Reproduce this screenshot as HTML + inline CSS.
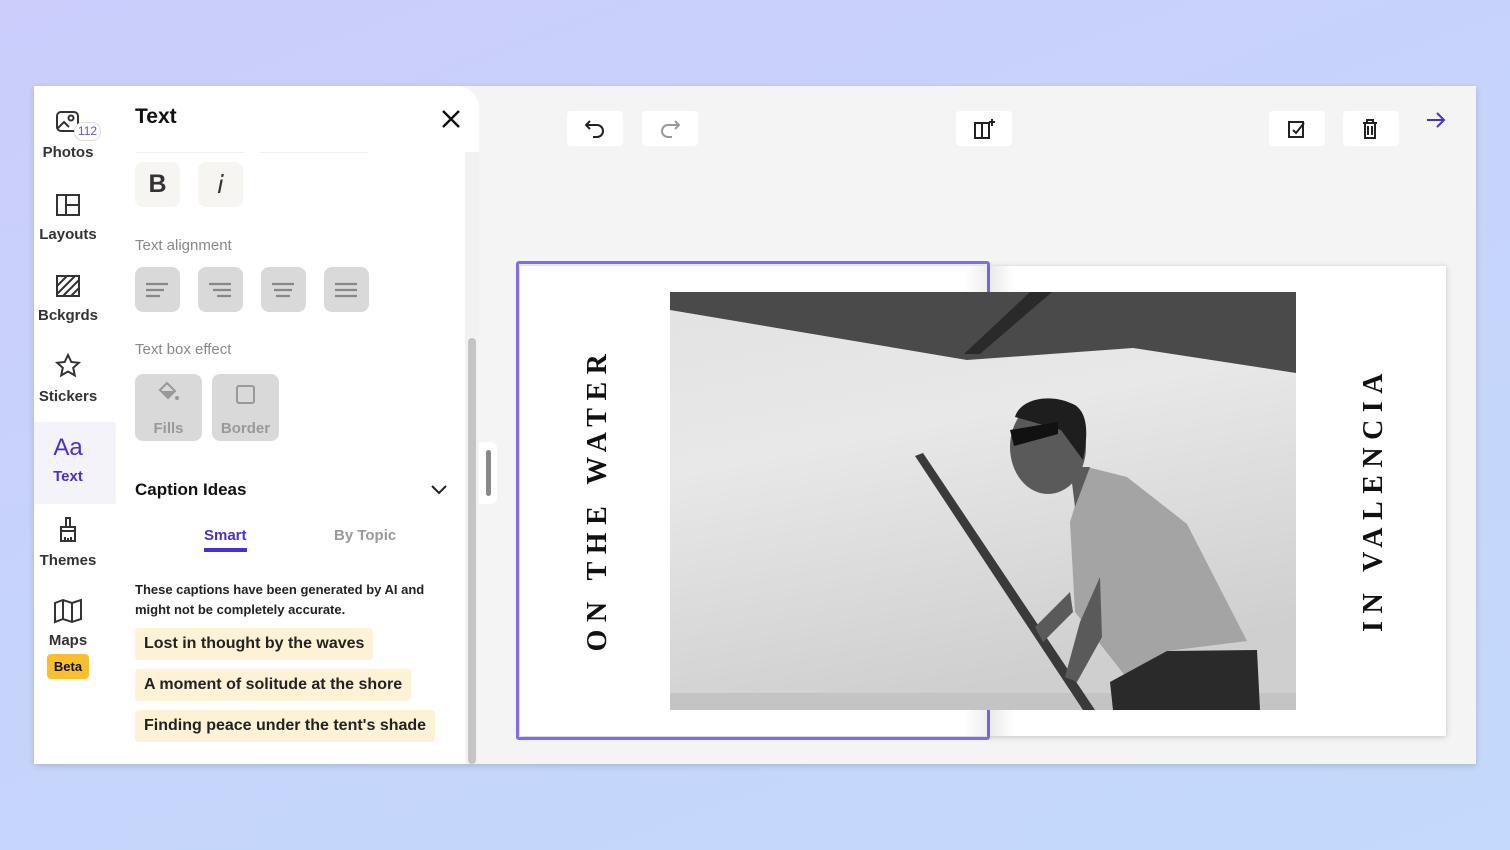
<!DOCTYPE html>
<html><head><meta charset="utf-8"><style>
*{margin:0;padding:0;box-sizing:border-box}
body{width:1510px;height:850px;overflow:hidden;background:linear-gradient(160deg,#cbcdfb 0%,#c6d4fb 50%,#c4d9fb 100%);font-family:"Liberation Sans",sans-serif;position:relative}
.abs{position:absolute}
#app{left:34px;top:86px;width:1442px;height:678px;background:#f4f4f4;box-shadow:0 2px 6px rgba(0,0,0,.15);overflow:hidden}
#side{left:0;top:0;width:82px;height:678px;background:#fff}
.nav{position:absolute;left:0;width:68px;text-align:center;font-size:15px;color:#333;font-weight:bold}
.nav svg{display:block;margin:0 auto 8px}
#panel{left:82px;top:0;width:363px;height:678px;background:#fff;border-top-right-radius:22px}
.lbl{font-size:15px;color:#888}
.btn{position:absolute;width:45px;height:45px;border-radius:8px;background:#d9d9d9}
.cap{position:absolute;left:100px;height:32px;background:#fdf1d6;border-radius:4px;font-size:16px;font-weight:bold;color:#222;padding:7px 9px;white-space:nowrap}
.tb{position:absolute;top:25px;width:56px;height:35px;background:#fff;border-radius:4px}
.tb svg{position:absolute;left:18px;top:8px}
.vt{position:absolute;font-family:"Liberation Serif",serif;font-weight:bold;font-size:28px;letter-spacing:7.5px;color:#111;white-space:nowrap;transform:rotate(-90deg);transform-origin:center}
</style></head><body>
<div id="app" class="abs">
 <div id="side" class="abs">
  <div class="nav" style="top:24px"><svg width="26" height="26" viewBox="0 0 26 26" fill="none" stroke="#333" stroke-width="2"><rect x="2" y="2" width="21" height="19" rx="4"/><circle cx="16" cy="8" r="2.5"/><path d="M3 18l6-6 5 5"/></svg>Photos</div>
  <div class="abs" style="left:40px;top:36px;width:27px;height:19px;border-radius:9px;background:#fff;border:1px solid #ddd;color:#6a4cf0;font-size:12px;text-align:center;line-height:17px">112</div>
  <div class="nav" style="top:106px"><svg width="26" height="26" viewBox="0 0 26 26" fill="none" stroke="#333" stroke-width="2"><rect x="2" y="3" width="22" height="20"/><path d="M11 3v20M11 13h13"/></svg>Layouts</div>
  <div class="nav" style="top:187px"><svg width="26" height="26" viewBox="0 0 26 26" fill="none" stroke="#333" stroke-width="2"><rect x="2" y="3" width="22" height="20"/><path d="M2 13l10-10M2 21l18-18M8 23l16-16M16 23l8-8"/></svg>Bckgrds</div>
  <div class="nav" style="top:266px"><svg width="28" height="28" viewBox="0 0 28 28" fill="none" stroke="#333" stroke-width="2"><path d="M14 3l3.3 7 7.5.8-5.6 5 1.6 7.6L14 19.5 7.2 23.4l1.6-7.6-5.6-5 7.5-.8z"/></svg>Stickers</div>
  <div class="abs" style="left:0;top:336px;width:82px;height:82px;background:#f3f3f9"></div>
  <div class="nav" style="top:348px;color:#4a2fd8;font-weight:bold"><div style="font-size:24px;font-weight:normal;line-height:28px;margin-bottom:6px">Aa</div>Text</div>
  <div class="nav" style="top:430px"><svg width="26" height="28" viewBox="0 0 26 28" fill="none" stroke="#333" stroke-width="2"><path d="M11 2h4v9h-4zM6 11h14v4H6zM6 15v10h14V15M10 25v-4M13 25v-3M16 25v-4"/></svg>Themes</div>
  <div class="nav" style="top:512px"><svg width="30" height="26" viewBox="0 0 30 26" fill="none" stroke="#333" stroke-width="2"><path d="M2 5l8-3 9 3 9-3v19l-9 3-9-3-8 3zM10 2v19M19 5v19"/></svg>Maps</div>
  <div class="abs" style="left:13px;top:568px;width:42px;height:25px;background:#fbbf2e;border-radius:4px;font-size:13px;font-weight:bold;text-align:center;line-height:25px;color:#111">Beta</div>
 </div>
 <div id="panel" class="abs">
  <div class="abs" style="left:19px;top:19px;font-size:21px;font-weight:bold;color:#111">Text</div>
  <svg class="abs" style="left:326px;top:24px" width="18" height="18" viewBox="0 0 18 18" stroke="#111" stroke-width="2.4"><path d="M1 1l16 16M17 1L1 17"/></svg>
  <div class="abs" style="left:19px;top:66px;width:110px;height:1px;background:#f0f0f0"></div>
  <div class="abs" style="left:143px;top:66px;width:110px;height:1px;background:#f0f0f0"></div>
  <div class="btn" style="left:19px;top:76px;background:#f6f5f2;font-size:25px;font-weight:bold;text-align:center;line-height:45px;color:#333">B</div>
  <div class="btn" style="left:82px;top:76px;background:#f6f5f2;font-size:25px;font-style:italic;text-align:center;line-height:45px;color:#333;font-family:'DejaVu Sans',sans-serif">i</div>
  <div class="abs lbl" style="left:19px;top:151px">Text alignment</div>
  <div class="btn" style="left:19px;top:181px"><svg width="45" height="45" stroke="#888" stroke-width="2.2"><path d="M11 17h22M11 23h18M11 29h14"/></svg></div>
  <div class="btn" style="left:82px;top:181px"><svg width="45" height="45" stroke="#888" stroke-width="2.2"><path d="M11 17h22M15 23h18M19 29h14"/></svg></div>
  <div class="btn" style="left:145px;top:181px"><svg width="45" height="45" stroke="#888" stroke-width="2.2"><path d="M11 17h22M13 23h18M15 29h14"/></svg></div>
  <div class="btn" style="left:208px;top:181px"><svg width="45" height="45" stroke="#888" stroke-width="2.2"><path d="M11 17h22M11 23h22M11 29h22"/></svg></div>
  <div class="abs lbl" style="left:19px;top:255px">Text box effect</div>
  <div class="btn" style="left:19px;top:288px;width:67px;height:67px;text-align:center;color:#999;font-weight:bold;font-size:15px"><svg width="67" height="38" viewBox="0 0 67 38" fill="#999"><path d="M25 16l7-7 8 8-7 7z" fill="none" stroke="#999" stroke-width="2"/><path d="M26 17l14 0-7 7z"/><circle cx="42" cy="24" r="2"/></svg><div style="margin-top:4px">Fills</div></div>
  <div class="btn" style="left:96px;top:288px;width:67px;height:67px;text-align:center;color:#999;font-weight:bold;font-size:15px"><svg width="67" height="38"><rect x="25" y="12" width="17" height="17" rx="2" fill="none" stroke="#999" stroke-width="2"/></svg><div style="margin-top:4px">Border</div></div>
  <div class="abs" style="left:19px;top:394px;font-size:17px;font-weight:bold;color:#111">Caption Ideas</div>
  <svg class="abs" style="left:315px;top:398px" width="16" height="12" stroke="#222" stroke-width="2" fill="none"><path d="M1 2l7 7 7-7"/></svg>
  <div class="abs" style="left:88px;top:441px;font-size:15px;font-weight:bold;color:#4a2fd8">Smart</div>
  <div class="abs" style="left:88px;top:462px;width:43px;height:4px;background:#4a2fd8"></div>
  <div class="abs" style="left:218px;top:441px;font-size:15px;font-weight:bold;color:#999">By Topic</div>
  <div class="abs" style="left:19px;top:494px;font-size:13px;font-weight:bold;color:#222;line-height:20px;width:300px">These captions have been generated by AI and might not be completely accurate.</div>
  <div class="cap" style="left:19px;top:542px">Lost in thought by the waves</div>
  <div class="cap" style="left:19px;top:583px">A moment of solitude at the shore</div>
  <div class="cap" style="left:19px;top:624px">Finding peace under the tent's shade</div>
  <div class="abs" style="left:349px;top:66px;width:14px;height:612px;background:#f2f2f2"></div>
  <div class="abs" style="left:352px;top:252px;width:8px;height:426px;background:#c4c4c4;border-radius:4px"></div>
 </div>
 <div class="abs" style="left:445px;top:356px;width:18px;height:62px;background:#fff;border-radius:0 6px 6px 0"></div>
 <div class="abs" style="left:452px;top:364px;width:5px;height:46px;background:#888;border-radius:3px"></div>
 <div class="tb" style="left:533px"><svg width="20" height="20" fill="none" stroke="#222" stroke-width="2"><path d="M5 2L1 6l4 4M1 6h11a6 6 0 0 1 0 12H8"/></svg></div>
 <div class="tb" style="left:608px"><svg width="20" height="20" fill="none" stroke="#999" stroke-width="2"><path d="M15 2l4 4-4 4M19 6H8a6 6 0 0 0 0 12h4"/></svg></div>
 <div class="tb" style="left:922px"><svg width="22" height="20" fill="none" stroke="#222" stroke-width="2"><rect x="1" y="4" width="14" height="15"/><path d="M8 4v15M18 0v7M15 3h6"/></svg></div>
 <div class="tb" style="left:1235px"><svg width="20" height="20" fill="none" stroke="#222" stroke-width="2"><rect x="2" y="3" width="14" height="15"/><path d="M6 11l3 3 8-10"/></svg></div>
 <div class="tb" style="left:1309px"><svg width="20" height="20" fill="none" stroke="#222" stroke-width="2"><path d="M2 4h14M6 4V1h6v3M4 4v15h10V4M7 7v9M11 7v9"/></svg></div>
 <svg class="abs" style="left:1392px;top:25px" width="20" height="18" fill="none" stroke="#4a2fd8" stroke-width="2"><path d="M1 9h17M11 2l7 7-7 7"/></svg>
 <div class="abs" style="left:486px;top:180px;width:926px;height:470px;background:#fff;box-shadow:0 1px 6px rgba(0,0,0,.2)"></div>
 <div class="abs" style="left:482px;top:175px;width:474px;height:479px;border:3px solid #7b6cf0;border-radius:3px"></div>
 <div class="abs" style="left:930px;top:180px;width:50px;height:470px;background:linear-gradient(90deg,rgba(0,0,0,0),rgba(0,0,0,.08) 55%,rgba(0,0,0,0))"></div>
 <svg class="abs" style="left:636px;top:206px" width="626" height="418" viewBox="0 0 626 418">
  <defs><linearGradient id="sk" x1="0" y1="0" x2="0.3" y2="1"><stop offset="0" stop-color="#e2e2e2"/><stop offset=".4" stop-color="#e8e8e8"/><stop offset="1" stop-color="#cfcfcf"/></linearGradient></defs>
  <rect width="626" height="418" fill="url(#sk)"/>
  <rect y="401" width="626" height="17" fill="#c4c4c4"/>
  <path d="M0 0H626V81L463 56 297 68 0 18Z" fill="#4a4a4a"/>
  <path d="M360 0h22L310 62h-16Z" fill="#2a2a2a"/>
  <path d="M245 164l8-3 172 257h-12Z" fill="#3a3a3a"/>
  <path d="M417 175l40 10 60 47 60 117-80 10-37 31-55-70-5-90z" fill="#a4a4a4"/>
  <path d="M430 285l-20 45-15 55 12 5 25-45z" fill="#5a5a5a"/>
  <path d="M400 300l-35 35 8 15 30-30z" fill="#5a5a5a"/>
  <path d="M497 359l90-1 3 60H443l-3-28z" fill="#2a2a2a"/>
  <ellipse cx="378" cy="155" rx="38" ry="47" fill="#5a5a5a"/>
  <path d="M345 125c5-18 35-25 60-12 15 10 12 35 8 55l-22-30z" fill="#1e1e1e"/>
  <path d="M340 138l48-8 0 12-44 12z" fill="#111"/>
  <path d="M400 175l20 0-15 40z" fill="#5a5a5a"/>
 </svg>
 <div class="vt" style="left:399px;top:397px;width:330px;text-align:center">ON THE WATER</div>
 <div class="vt" style="left:1195px;top:397px;width:290px;text-align:center">IN VALENCIA</div>
</div>
</body></html>
